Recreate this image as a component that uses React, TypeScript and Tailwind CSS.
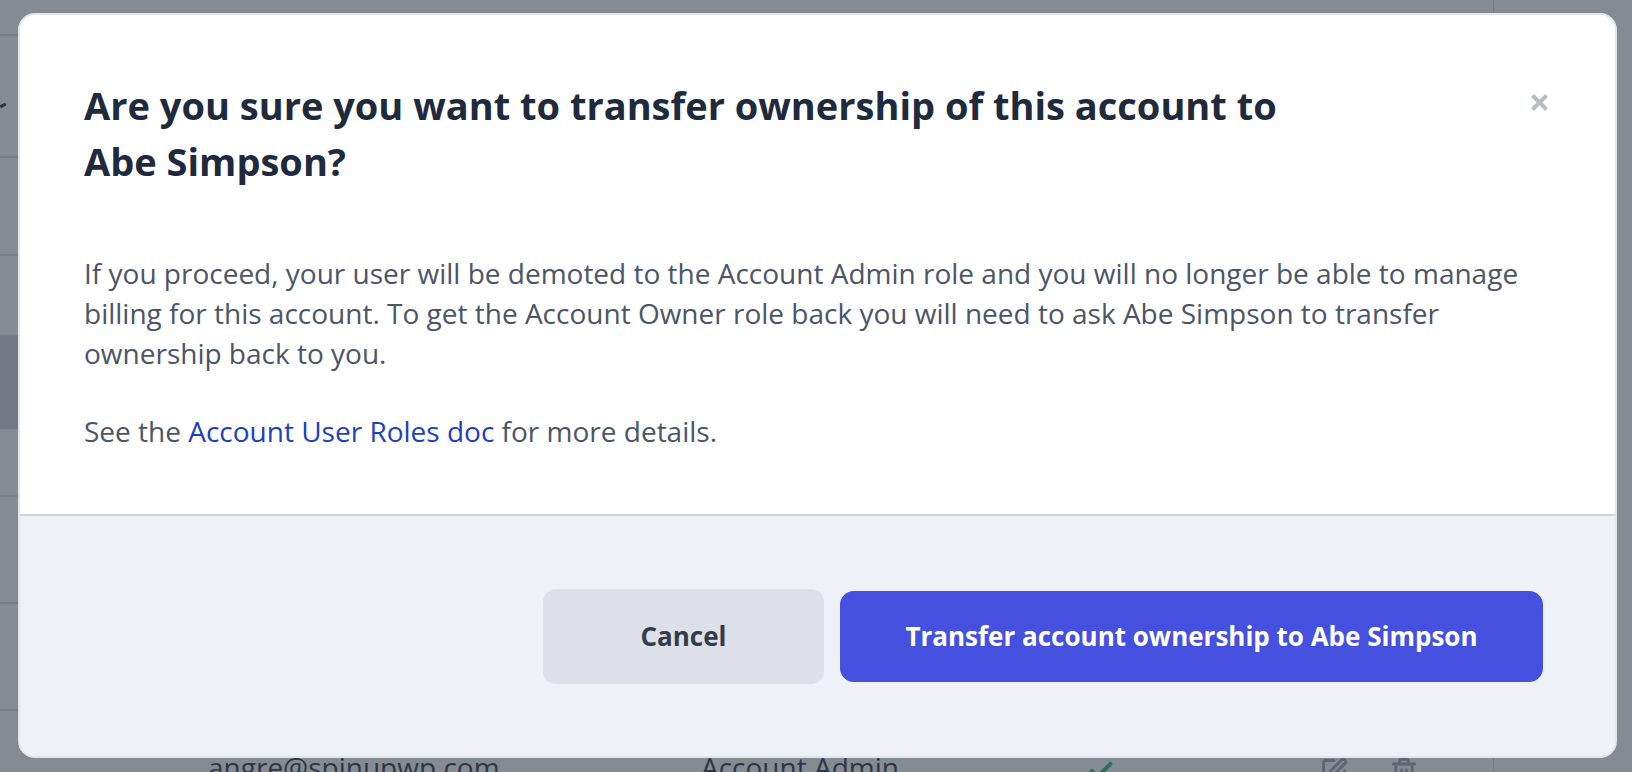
import { Check, SquarePen, Trash2 } from "lucide-react";

function CloseIcon() {
  return (
    <svg width="19" height="19" viewBox="0 0 19 19" fill="none">
      <path d="M2.5 2.5L16.5 16.5M16.5 2.5L2.5 16.5" stroke="#b9bdc4" strokeWidth="4" />
    </svg>
  );
}

function BackgroundTable() {
  return (
    <div className="w-[1494px] h-full border-r border-[#737a84] text-[#2e3646]">
      <div className="h-[36px] border-b-2 border-[#777e88] flex">
        <div className="ml-[1320px] -mt-[27px] flex gap-[47px] text-[#5f6673]">
          <SquarePen size={28} strokeWidth={2.5} />
          <Trash2 size={22} strokeWidth={2.5} />
        </div>
      </div>
      <div className="h-[122px] border-b-2 border-[#777e88]" />
      <div className="h-[98px] border-b-2 border-[#777e88] relative">
        <div className="absolute left-0 top-[-54px] h-[3px] w-[6px] bg-[#2e3646] rotate-[-25deg]" />
      </div>
      <div className="h-[241px] border-b-2 border-[#777e88] pt-[79px]">
        <div className="h-[94px] bg-[#737a86]" />
      </div>
      <div className="h-[107px] border-b-2 border-[#777e88]" />
      <div className="h-[107px] border-b-2 border-[#777e88]" />
      <div className="flex items-start pt-[36px] text-[28px] leading-[40px]">
        <span className="ml-[208px] w-[493px]">angre@spinupwp.com</span>
        <span className="w-[386px]">Account Admin</span>
        <Check size={28} strokeWidth={3.5} className="text-[#2f6e5a] mt-[10px]" />
        <div className="ml-[205px] mt-[10px] flex gap-[42px] text-[#5f6673]">
          <SquarePen size={28} strokeWidth={2.5} />
          <Trash2 size={28} strokeWidth={2.5} />
        </div>
      </div>
    </div>
  );
}

export default function App() {
  return (
    <div
      className="relative w-[1632px] h-[772px] overflow-hidden bg-[#858b93]"
      style={{ fontFamily: '"Open Sans", "Noto Sans", sans-serif' }}
    >
      <BackgroundTable />

      <div className="absolute left-[18px] top-[13px] w-[1599px] h-[745px] rounded-[17px] border-2 border-[#e3e5e9] bg-white overflow-hidden flex flex-col">
        <button className="absolute right-[66px] top-[78px]">
          <CloseIcon />
        </button>

        <div className="flex-1 pl-[64px] pr-[72px] pt-[62px]">
          <h2 className="max-w-[1240px] text-[38px] leading-[56px] font-bold text-[#1f2a3c]">
            Are you sure you want to transfer ownership of this account to Abe Simpson?
          </h2>

          <div className="mt-[64px] text-[28px] leading-[40px] text-[#4b5567]">
            <p>
              If you proceed, your user will be demoted to the Account Admin role and you will no longer be able to manage
              billing for this account. To get the Account Owner role back you will need to ask Abe Simpson to transfer
              ownership back to you.
            </p>
            <p className="mt-[38px]">
              See the <a className="text-[#1e3fc0]">Account User Roles doc</a> for more details.
            </p>
          </div>
        </div>

        <div className="h-[242px] shrink-0 border-t-2 border-[#cfd4db] bg-[#eef1f6] flex items-center justify-end gap-[16px] pr-[72px]">
          <button className="w-[281px] h-[95px] rounded-[13px] bg-[#dde0e8] text-[26px] font-bold text-[#343c4a]">
            Cancel
          </button>
          <button className="w-[703px] h-[91px] rounded-[14px] bg-[#4650df] text-[26px] font-bold text-white">
            Transfer account ownership to Abe Simpson
          </button>
        </div>
      </div>
    </div>
  );
}
